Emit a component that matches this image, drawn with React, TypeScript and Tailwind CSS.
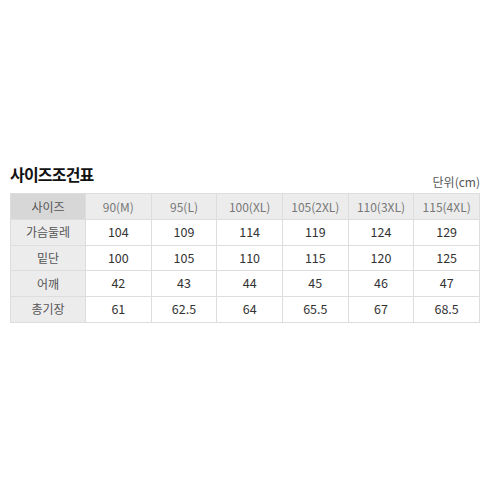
import React from "react";

const headers = ["90(M)", "95(L)", "100(XL)", "105(2XL)", "110(3XL)", "115(4XL)"];
const rows: [string, string[]][] = [
  ["가슴둘레", ["104", "109", "114", "119", "124", "129"]],
  ["밑단", ["100", "105", "110", "115", "120", "125"]],
  ["어깨", ["42", "43", "44", "45", "46", "47"]],
  ["총기장", ["61", "62.5", "64", "65.5", "67", "68.5"]],
];

export default function App() {
  return (
    <div
      className="w-[492px] h-[492px] bg-white pt-[165px] pl-[10px]"
      style={{ fontFamily: '"Noto Sans CJK KR", "Noto Sans", sans-serif' }}
    >
      <div className="w-[470px] h-[28px] flex items-start justify-between">
        <div className="text-[16px] font-bold text-[#111] leading-[19px] tracking-[-0.8px]">사이즈조건표</div>
        <div className="text-[12px] text-[#555] leading-[14px] mt-[10px]">단위(cm)</div>
      </div>
      <table className="w-[470px] border-collapse table-fixed">
        <colgroup>
          <col className="w-[75px]" />
          {headers.map((h) => (
            <col key={h} />
          ))}
        </colgroup>
        <thead>
          <tr className="h-[26px]">
            <th className="bg-[#d7d7d7] border border-[#dddddd] text-[12px] font-normal text-[#555]">사이즈</th>
            {headers.map((h) => (
              <th key={h} className="bg-[#ececec] border border-[#dddddd] text-[12px] font-normal text-[#777]">
                {h}
              </th>
            ))}
          </tr>
        </thead>
        <tbody>
          {rows.map(([label, vals]) => (
            <tr key={label} className="h-[25.7px]">
              <td className="bg-[#ececec] border border-[#dddddd] text-center text-[12px] text-[#555]">{label}</td>
              {vals.map((v, i) => (
                <td key={i} className="bg-white border border-[#dddddd] text-center text-[12.5px] text-[#333]">
                  {v}
                </td>
              ))}
            </tr>
          ))}
        </tbody>
      </table>
    </div>
  );
}
